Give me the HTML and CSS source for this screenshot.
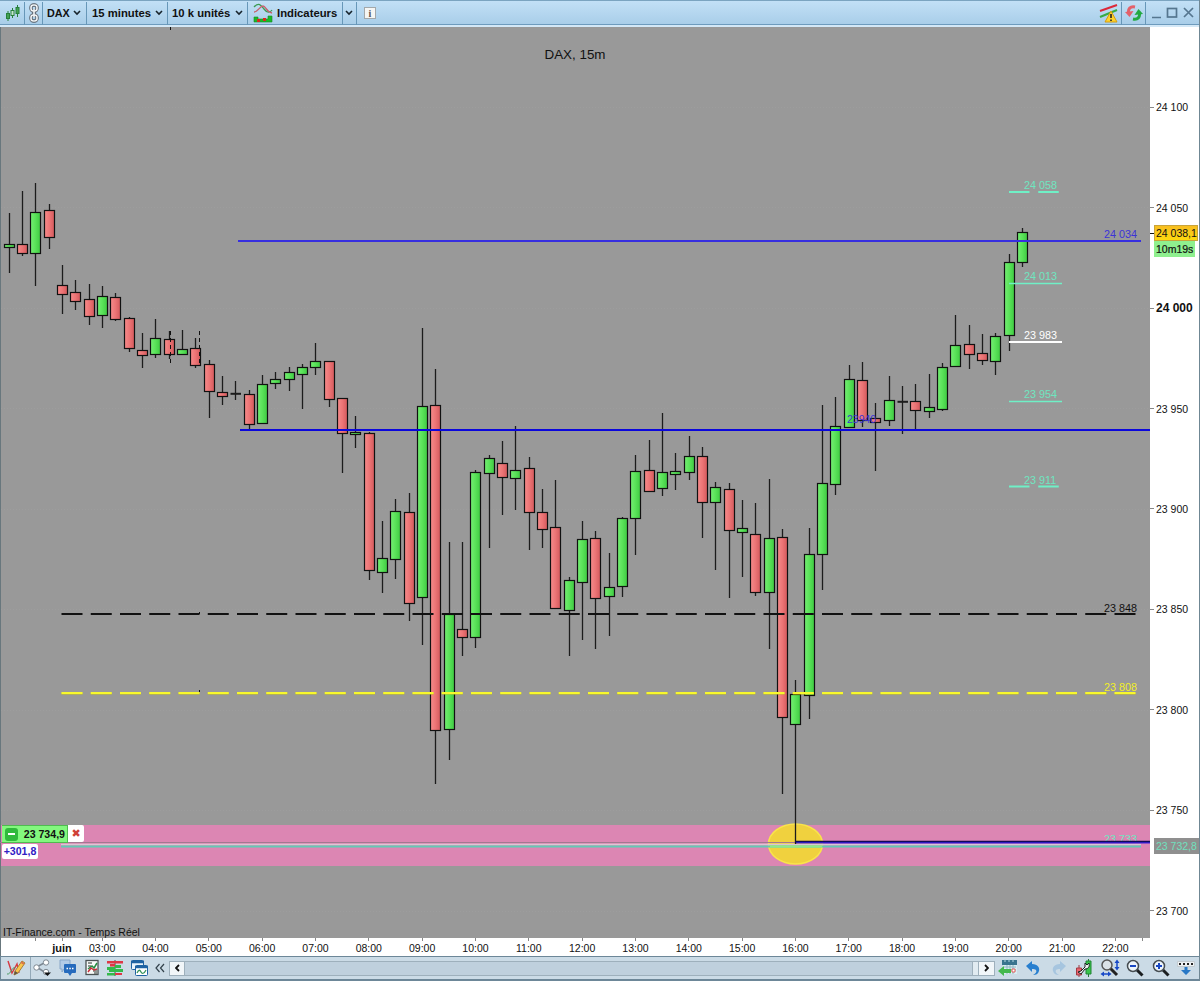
FILE: index.html
```html
<!DOCTYPE html>
<html lang="fr">
<head>
<meta charset="utf-8"/>
<title>DAX, 15m</title>
<link rel="stylesheet" href="styles.css">
</head>
<body>
<div class="window">
<header class="toolbar">
	<div class="tool tool-candles">
		<svg width="16" height="18" viewBox="0 0 16 18"><g stroke="#26803a" fill="#43a054"><path d="M3 7v10M7.500 4v10M12.500 1v12"/><rect x="1.500" y="9.500" width="3" height="5"/><rect x="6" y="6.500" width="3" height="5" fill="#c5e5d0"/><rect x="11" y="3.500" width="3" height="6"/></g></svg>
	</div>
	<div class="tool tool-link">
		<svg width="12" height="20" viewBox="0 0 12 20" fill="none"><g stroke="#59616a" stroke-width="3.400"><rect x="3" y="2" width="6" height="6" rx="2.500"/><rect x="3" y="12" width="6" height="6" rx="2.500"/><path d="M6 6v8"/></g><g stroke="#f1f4f6" stroke-width="1.600"><rect x="3" y="2" width="6" height="6" rx="2.500"/><rect x="3" y="12" width="6" height="6" rx="2.500"/><path d="M6 6v8"/></g></svg>
	</div>
	<div class="tool tool-symbol">DAX <svg class="chevron" viewBox="0 0 8 6"><path d="M1 1l3 3 3-3"/></svg></div>
	<div class="tool tool-period">15 minutes <svg class="chevron" viewBox="0 0 8 6"><path d="M1 1l3 3 3-3"/></svg></div>
	<div class="tool tool-units">10 k unités <svg class="chevron" viewBox="0 0 8 6"><path d="M1 1l3 3 3-3"/></svg></div>
	<div class="tool tool-indicators">
		<svg width="20" height="20" viewBox="0 0 20 20" fill="none"><path d="M1 4C6-1 8 2 11 6s6 4 8 1" stroke="#3b9a53" stroke-width="1.300"/><path d="M1 9C5 9 7 3 10 3s3 6 9 7" stroke="#c8606c" stroke-width="1.300"/><path d="M1 19v-5h4v2h10v-3h4v6z" fill="#19b927" stroke="#178b22" stroke-width=".6"/><path d="M4 16h3v3H4zM10 15h3v3h-3z" fill="#d82a20"/></svg>
		Indicateurs
	</div>
	<div class="tool tool-more"><svg class="chevron" viewBox="0 0 8 6"><path d="M1 1l3 3 3-3"/></svg></div>
	<div class="info">i</div>
	<div class="spacer"></div>
	<div class="tool tool-alert">
		<svg width="20" height="20" viewBox="0 0 20 20"><path d="M1 8L18 2" stroke="#dc2838" stroke-width="2"/><path d="M1 14L18 7" stroke="#38aa43" stroke-width="2"/><path d="M12 8l6 11H6z" fill="#ffd32b" stroke="#d49c12"/><path d="M12 11v4M12 16.500v1.500" stroke="#222" stroke-width="1.600"/></svg>
	</div>
	<div class="tool tool-refresh">
		<svg width="18" height="16" viewBox="0 0 18 16" fill="none" stroke-width="3"><path d="M10 2C5 1 3 4 3.500 8" stroke="#e3616a"/><path d="M0 7l4.500 5L8.500 6z" fill="#e3616a"/><path d="M8 14c5 1 7-2 6.500-6" stroke="#23a942"/><path d="M18 9l-4.500-5L9.500 10z" fill="#23a942"/></svg>
	</div>
	<svg class="window-buttons" width="42" height="12" viewBox="0 0 42 12" fill="none" stroke="#55768f" stroke-width="1.700"><path d="M0 10.500h9M32 1l9 9M41 1l-9 9"/><rect x="15.500" y="1.500" width="9" height="8.500"/></svg>
</header>

<div class="middle">
	<div class="chart">
		<svg class="plot" width="1150" height="911" viewBox="0 27 1150 911">
			<defs>
				<linearGradient id="up"><stop offset="0" stop-color="#75ee74"/><stop offset=".5" stop-color="#59e258"/><stop offset="1" stop-color="#3fc942"/></linearGradient>
				<linearGradient id="down"><stop offset="0" stop-color="#f68b8b"/><stop offset=".5" stop-color="#ec7475"/><stop offset="1" stop-color="#d3595c"/></linearGradient>
			</defs>
			<g id="grid"></g>
			<rect class="zone" x="1" y="825" width="1149" height="41"/>
			<text class="label aqua" x="1104" y="843">23 733</text>
			<ellipse class="marker" cx="795.500" cy="844" rx="27" ry="20"/>
			<path class="entry" d="M0 842.500h796"/>
			<path class="support-light" d="M61 844.500H1141"/>
			<path class="support" d="M61 846.500H1141"/>
			<path class="support-glow" d="M770 846.500H822"/>
			<path class="low-shade" d="M795 842.500h355"/>
			<g id="candles"></g>
			<path class="low-line" d="M795 841.500h355"/>
			<path class="session" d="M170.500 331v35M199.500 331v35"/>
			<path class="session" d="M170.500 27v3M199.500 612v2M199.500 690v2"/>
			<path class="resistance" d="M238 241H1141"/>
			<path class="pivot" d="M240 430H1150"/>
			<path class="dashed black" d="M61.500 614H1137"/>
			<path class="dashed yellow-edge" d="M61.500 693.500H1137"/>
			<path class="dashed yellow" d="M61.500 693H1137"/>
			<path class="level dash" d="M1009 192H1059M1009 486.500H1059"/>
			<path class="level thin" d="M1009 283.500H1062M1009 401.500H1062"/>
			<path class="level white" d="M1009 342H1062"/>
			<text class="label aqua" x="1024" y="189">24 058</text>
			<text class="label aqua" x="1024" y="280">24 013</text>
			<text class="label white" x="1024" y="339">23 983</text>
			<text class="label aqua" x="1024" y="398">23 954</text>
			<text class="label aqua" x="1024" y="484">23 911</text>
			<text class="label blue" x="1104" y="238">24 034</text>
			<text class="label blue tight" x="847" y="423">23940</text>
			<text class="label black" x="1104" y="611.500">23 848</text>
			<text class="label yellow" x="1104" y="690.500">23 808</text>
		</svg>
		<div class="chart-title">DAX, 15m</div>
		<div class="order">
			<div class="order-row">
				<div class="order-price"><span class="minus"></span>23 734,9</div>
				<div class="order-close">✖</div>
			</div>
			<div class="order-gain">+301,8</div>
		</div>
		<div class="source">IT-Finance.com - Temps Réel</div>
	</div>
	<div class="price-axis">
		<div class="price">24 100</div>
		<div class="price">24 050</div>
		<div class="price major">24 000</div>
		<div class="price">23 950</div>
		<div class="price">23 900</div>
		<div class="price">23 850</div>
		<div class="price">23 800</div>
		<div class="price">23 750</div>
		<div class="price">23 700</div>
		<div class="last-price">24 038,1</div>
		<div class="countdown">10m19s</div>
		<div class="low-price">23 732,8</div>
	</div>
</div>

<div class="time-axis">
	<div class="time edge"></div>
	<div class="time month">juin</div>
	<div class="time">03:00</div>
	<div class="time">04:00</div>
	<div class="time">05:00</div>
	<div class="time">06:00</div>
	<div class="time">07:00</div>
	<div class="time">08:00</div>
	<div class="time">09:00</div>
	<div class="time">10:00</div>
	<div class="time">11:00</div>
	<div class="time">12:00</div>
	<div class="time">13:00</div>
	<div class="time">14:00</div>
	<div class="time">15:00</div>
	<div class="time">16:00</div>
	<div class="time">17:00</div>
	<div class="time">18:00</div>
	<div class="time">19:00</div>
	<div class="time">20:00</div>
	<div class="time">21:00</div>
	<div class="time">22:00</div>
	<div class="time edge"></div>
</div>

<footer class="bottombar">
	<div class="draw">
		<svg width="20" height="18" viewBox="0 0 20 18" fill="none"><path d="M2 2l4 12 5-9 2 9" stroke="#d63a42" stroke-width="1.400"/><path d="M1 15C5 16 6 7 9 9" stroke="#4d9c64"/><path d="M8 16l1-4 7-10 3 2-7 10z" fill="#fbc64b" stroke="#a4803a"/><path d="M8 16l1-4 3 2z" fill="#615443"/><path d="M15 3l3 2" stroke="#db744a" stroke-width="2"/></svg>
	</div>
	<div class="icons-left">
		<svg width="20" height="18" viewBox="0 0 20 18"><path d="M13 3L3.500 8l9.500 6" fill="none" stroke="#7b8690" stroke-width="1.500"/><g fill="#fff" stroke="#7b8690"><circle cx="13" cy="3.500" r="2.700"/><circle cx="3.500" cy="8.500" r="2.700"/><circle cx="13" cy="13" r="2.700"/></g><path d="M11 13.500h7L14.500 17z" fill="#111"/></svg>
		<svg width="18" height="18" viewBox="0 0 18 18"><path d="M1 1h10v9H5l-2 3v-3H1z" fill="#b2cbe7" stroke="#88a7c9"/><path d="M6 5h10q1 0 1 1v7q0 1-1 1h-3l-2 3-2-3H6q-1 0-1-1V6q0-1 1-1z" fill="#266bbd"/><path d="M7.500 9.500H9M10.300 9.500h1.500M13 9.500h1.500" stroke="#fff" stroke-width="1.500"/></svg>
		<svg width="16" height="18" viewBox="0 0 16 18"><rect x="2" y="1.500" width="12" height="14" fill="#f7faf8" stroke="#4b5354" stroke-width="1.300"/><path d="M4 4h4M4 7h3M9 12h4M10 14h3" stroke="#29322d"/><path d="M4 10l4-3 2 2 3-5" fill="none" stroke="#258b41" stroke-width="1.500"/><path d="M4 13l3-4 3 2 3-1" fill="none" stroke="#c82c38" stroke-width="1.500"/></svg>
		<svg width="18" height="18" viewBox="0 0 18 18"><path d="M9 1v16" stroke="#44544a"/><g fill="#35b94c"><path d="M1 8h8v3H1zM3 11h6v2H3zM1 14h8v2.500H1z"/><path d="M9 6h6v3H9zM9 10h8v3H9z"/></g><g fill="#de3845"><path d="M1 2h8v2.500H1zM4 5h5v2.500H4zM9 2h8v2.500H9zM9 14h7v2H9z"/></g></svg>
		<svg width="20" height="18" viewBox="0 0 20 18"><rect x="1.500" y="1.500" width="12" height="9" rx="1" fill="#e9f3fb" stroke="#1f63a3"/><path d="M1 3h13" stroke="#1f63a3" stroke-width="2.500"/><rect x="5.500" y="6.500" width="12" height="10" rx="1" fill="#fff" stroke="#1f63a3"/><path d="M5 8h13" stroke="#1f63a3" stroke-width="2.500"/><path d="M7 14c2-4 3-3 4-1s3 2 5-2" fill="none" stroke="#35935a" stroke-width="1.300"/></svg>
	</div>
	<svg class="collapse" width="10" height="10" viewBox="0 0 10 10"><path d="M4.500 1L1 5l3.500 4M9 1L5.500 5 9 9"/></svg>
	<div class="scrollbar">
		<div class="scroll-button"><svg width="5" height="8" viewBox="0 0 5 8"><path d="M4 1L1 4l3 3"/></svg></div>
		<div class="scroll-track"></div>
		<div class="scroll-thumb"></div>
		<div class="scroll-button"><svg width="5" height="8" viewBox="0 0 5 8"><path d="M1 1l3 3-3 3"/></svg></div>
	</div>
	<div class="icons-right">
		<svg width="20" height="18" viewBox="0 0 20 18"><path d="M5 2h14v13H5z" fill="#d9edf2"/><path d="M4 1h15v5H4z" fill="#39748e"/><path d="M7 0v3M11 0v3M15 0v3" stroke="#b5d8e4"/><path d="M6 8h12M6 11h12M9 6v9M12 6v9M15 6v9" stroke="#92b7c3"/><path d="M14 10h3v3h-3z" fill="#fff" stroke="#df5d59"/><path d="M0 12l6-5v3h7v4H6v3z" fill="#44b84e"/></svg>
		<svg width="16" height="16" viewBox="0 0 16 16"><path d="M1 6l6-5v3c6 0 8 4 7 7-1 3-3 4-6 4 3-2 4-3 3-5-1-1-2-1-4-1v3z" fill="#287fcf"/></svg>
		<svg width="16" height="16" viewBox="0 0 16 16"><path d="M15 6L9 1v3C3 4 1 8 2 11c1 3 3 4 6 4-3-2-4-3-3-5 1-1 2-1 4-1v3z" fill="#a6c5df"/></svg>
		<svg width="18" height="18" viewBox="0 0 18 18"><path d="M13.500 0v18" stroke="#267a36"/><path d="M11 2h5v13h-5z" fill="#38c54b" stroke="#218534"/><path d="M4 6v12" stroke="#993842"/><path d="M1.500 9h5v7h-5z" fill="#e9636e" stroke="#a13b43"/><path d="M3 13l3-1 4-4V4l2 2 2-2c1 4-1 6-4 6l-4 5z" fill="#edf0ef" stroke="#1b2420"/></svg>
		<svg width="20" height="18" viewBox="0 0 20 18"><path d="M10 9l7 7" stroke="#222" stroke-width="3"/><circle cx="7" cy="6" r="5" fill="#dae2e7" stroke="#555" stroke-width="1.500"/><path d="M17 2v8M2 15h8" stroke="#1749c8" stroke-width="1.500"/><path d="M14.500 4L17 .5 19.500 4zM14.500 8L17 11.500 19.500 8zM4 12.500L.5 15 4 17.500zM8 12.500l3.500 2.500L8 17.500z" fill="#1749c8"/></svg>
		<svg width="18" height="18" viewBox="0 0 18 18"><path d="M10.500 10.500l6 6" stroke="#1b1e20" stroke-width="3"/><circle cx="7" cy="7" r="5.500" fill="#eef6fb" stroke="#464d51" stroke-width="1.500"/><path d="M4 7h6" stroke="#1947c2" stroke-width="2"/></svg>
		<svg width="18" height="18" viewBox="0 0 18 18"><path d="M10.500 10.500l6 6" stroke="#1b1e20" stroke-width="3"/><circle cx="7" cy="7" r="5.500" fill="#eef6fb" stroke="#464d51" stroke-width="1.500"/><path d="M4 7h6M7 4v6" stroke="#1947c2" stroke-width="2"/></svg>
		<svg width="18" height="16" viewBox="0 0 18 16"><path d="M.5 1.500h17v5H.5z" fill="#edf1f3" stroke="#c3cbd0"/><path d="M2 4h15" stroke="#222" stroke-width="2" stroke-dasharray="2 2"/><path d="M7.500 7h3v3H14l-5 5-5-5h3.500z" fill="#2878c6"/></svg>
	</div>
</footer>
</div>
<script src="chart.js"></script>
</body>
</html>
```
FILE: styles.css
```css
* {
	box-sizing: border-box;
}
body {
	margin: 0;
	font-family: "Liberation Sans", Arial, sans-serif;
	font-size: 10.5px;
	color: #111;
	background-color: #fff;
}
svg {
	display: block;
	flex: none;
}
.window {
	width: 1200px;
	height: 981px;
	overflow: hidden;
	border-right: 1px solid #6f8794;
	display: flex;
	flex-direction: column;
}

/* top toolbar */
.toolbar {
	height: 27px;
	flex: none;
	display: flex;
	align-items: center;
	padding: 0 5px 2px 1px;
	background: linear-gradient(#c2e0f6, #a9cee9 88%, #6d9bbd 89%, #6d9bbd 93%, #d3e8f7 94%);
	border-top: 1px solid #7ba4c0;
	font-size: 11.3px;
	font-weight: bold;
	white-space: nowrap;
}
.tool {
	height: 23px;
	display: flex;
	align-items: center;
	border-right: 1px solid #6797b8;
	padding: 0 4px;
}
.tool-candles {
	width: 24px;
}
.tool-link {
	width: 18px;
	padding: 0 3px;
}
.tool-symbol {
	width: 44px;
	padding: 0 5px 0 4px;
	font-size: 10.8px;
	justify-content: space-between;
}
.tool-period {
	width: 81px;
	padding-left: 5px;
	justify-content: space-between;
}
.tool-units {
	width: 80px;
	justify-content: space-between;
}
.tool-indicators {
	width: 95px;
	padding-left: 5px;
	gap: 4px;
}
.tool-more {
	width: 14px;
	padding: 0 2px;
}
.chevron {
	width: 8px;
	height: 6px;
	fill: none;
	stroke: #18242c;
	stroke-width: 1.6;
}
.info {
	width: 12px;
	height: 12px;
	margin-left: 7px;
	border: 1px solid #a3a8aa;
	background-color: #f6f6f4;
	font: bold 10px/11px "Liberation Serif", serif;
	text-align: center;
	color: #555;
}
.spacer {
	flex: 1;
}
.tool-alert {
	width: 23px;
	padding: 0;
}
.tool-refresh {
	width: 24px;
	padding: 0 3px;
}
.window-buttons {
	margin-left: 6px;
}

/* chart */
.middle {
	height: 911px;
	flex: none;
	display: flex;
}
.chart {
	position: relative;
	width: 1150px;
	background-color: #999;
	box-shadow: inset 1px 0 #68777d;
}
.chart-title {
	position: absolute;
	top: 20px;
	left: 0;
	width: 100%;
	text-align: center;
	font-size: 13.4px;
}
#grid path {
	stroke: #9d9d9d;
	stroke-dasharray: 1 2;
}
#candles path {
	stroke: #1c1c1c;
	stroke-width: 1.3;
}
#candles rect {
	stroke: #111;
	stroke-width: 1.2;
}
.zone {
	fill: #dc86b3;
}
.marker {
	fill: #f0d13e;
	stroke: #f9e44a;
	stroke-width: 1.5;
}
.entry {
	stroke: #a27890;
}
.support-light {
	stroke: #dbc6d3;
	stroke-width: 1.5;
}
.support {
	stroke: #62c9b5;
	stroke-width: 2;
}
.support-glow {
	stroke: #8ee98d;
	stroke-width: 2;
}
.low-line {
	stroke: #100a58;
	stroke-width: 1.5;
}
.low-shade {
	stroke: #3a1fe0;
	stroke-width: 2;
}
.session {
	stroke: #111;
	stroke-dasharray: 4 3;
}
.resistance {
	stroke: #372fe0;
	stroke-width: 2;
}
.pivot {
	stroke: #0a06dc;
	stroke-width: 2;
}
.dashed {
	stroke-width: 2;
	stroke-dasharray: 21 8.25;
}
path.black {
	stroke: #111;
}
path.yellow {
	stroke: #f8f82c;
}
path.yellow-edge {
	stroke: #c9c51b;
}
.level {
	stroke: #6ff0c6;
	stroke-width: 2;
}
.level.thin {
	stroke-width: 1.4;
}
.level.dash {
	stroke-dasharray: 20.5 8.75;
}
.level.white {
	stroke: #fff;
}
.label {
	font-size: 10.8px;
}
.label.aqua {
	fill: #6fe5c0;
}
.label.white {
	fill: #fff;
}
.label.blue {
	fill: #3b33d8;
}
.label.black {
	fill: #111;
}
.label.yellow {
	fill: #f1ee25;
}
.tight {
	font-size: 10.5px;
}
.order {
	position: absolute;
	left: 2px;
	top: 798px;
	font-size: 10.6px;
	font-weight: bold;
}
.order-row {
	display: flex;
}
.order-price {
	width: 66px;
	height: 18px;
	padding: 0 2px 0 3px;
	display: flex;
	align-items: center;
	justify-content: space-between;
	background-color: #83f87e;
	border: solid #4fbb50;
	border-width: 1px 1px 1px 0;
	white-space: nowrap;
}
.minus {
	width: 13px;
	height: 13px;
	border-radius: 3px;
	background: linear-gradient(#fff, #fff) center / 7px 2px no-repeat #31ba3c;
}
.order-close {
	width: 16px;
	height: 17px;
	background-color: #fff;
	border-radius: 0 2px 2px 0;
	color: #cf4238;
	font: 11px/17px "DejaVu Sans", sans-serif;
	text-align: center;
}
.order-gain {
	width: 36px;
	height: 15px;
	margin-top: 1px;
	background-color: #fff;
	border-radius: 2px;
	line-height: 15px;
	text-align: center;
	color: #3020c4;
}
.source {
	position: absolute;
	left: 3px;
	top: 899px;
	font-size: 10.5px;
	line-height: 12px;
}

/* axes */
.price-axis {
	position: relative;
	width: 49px;
	padding-top: 30px;
	background-color: #fff;
}
.price {
	height: 100.45px;
	display: flex;
	align-items: center;
	gap: 2px;
	white-space: nowrap;
}
.price::before {
	content: "";
	width: 4px;
	height: 1px;
	background-color: #888;
}
.price.major {
	font-size: 12px;
	font-weight: bold;
}
.last-price, .countdown, .low-price {
	position: absolute;
	left: 4px;
	padding-left: 2px;
	height: 16px;
	line-height: 16px;
	white-space: nowrap;
}
.last-price {
	top: 198px;
	width: 44px;
	background: linear-gradient(#f7bd20, #fdd90f);
	border: 1px solid #c9a43a;
	padding-left: 1px;
	line-height: 15px;
}
.last-price::before {
	content: "";
	position: absolute;
	left: -5px;
	top: 7px;
	width: 4px;
	height: 1px;
	background-color: #111;
}
.countdown {
	top: 214px;
	width: 41px;
	background-color: #8ff08f;
	-webkit-text-stroke: .2px #111;
}
.low-price {
	top: 811px;
	width: 45px;
	background-color: #8f8f8f;
	color: #6fe0be;
}
.time-axis {
	height: 18px;
	flex: none;
	display: flex;
	background-color: #fff;
	border-left: 1px solid #68777d;
	padding-left: 7.5px;
	white-space: nowrap;
}
.time {
	width: 53.34px;
	flex: none;
	display: flex;
	flex-direction: column;
	align-items: center;
	line-height: 12px;
}
.time::before {
	content: "";
	width: 1px;
	height: 3px;
	margin-bottom: 1px;
	background-color: #888;
}
.time.month {
	width: 27px;
	font-size: 11px;
	font-weight: bold;
}
.time.edge {
	width: 53px;
}
.time.edge:first-child {
	width: 54px;
	margin-right: -14px;
}
.time.edge:last-child {
	margin-left: -26px;
}

/* bottom toolbar */
.bottombar {
	height: 25px;
	flex: none;
	display: flex;
	align-items: center;
	background-color: #cbdbe6;
	border: solid #6d8798;
	border-width: 1px 0 2px 1px;
}
.draw {
	width: 30px;
	height: 22px;
	padding: 2px 0 0 5px;
	border-right: 1px solid #93a9b8;
}
.icons-left {
	width: 122px;
	padding: 0 3px 0 2px;
	display: flex;
	align-items: center;
	justify-content: space-between;
}
.collapse {
	margin-left: 2px;
	fill: none;
	stroke: #33424c;
	stroke-width: 1.2;
}
.scrollbar {
	width: 826px;
	height: 15px;
	margin-left: 4px;
	display: flex;
	border: 1px solid #9eb0bc;
}
.scroll-track {
	flex: 1;
	background-color: #bfd0dd;
}
.scroll-thumb {
	width: 7px;
	background-color: #e1ebf1;
	border: solid #9eb0bc;
	border-width: 0 1px;
}
.scroll-button {
	width: 15px;
	display: flex;
	align-items: center;
	justify-content: center;
	background-color: #f1f6f9;
	border-right: 1px solid #9eb0bc;
}
.scroll-button:last-child {
	border-right: 0;
}
.scroll-button path {
	fill: none;
	stroke: #111;
	stroke-width: 1.8;
}
.icons-right {
	width: 204px;
	display: grid;
	grid-template-columns: repeat(8, 25.5px);
	align-items: center;
	justify-items: center;
}
```
FILE: chart.js
```js
// one entry per 15 minutes: high, body top, body bottom, low, direction
var candles = [
	[213,244,247,273,"up"], [191,244,253,256,"down"], [183,212,253,286,"up"], [204,210,237,249,"down"],
	[265,285,294,314,"down"], [280,292,301,310,"down"], [284,299,316,325,"down"], [286,296,315,328,"up"],
	[293,297,319,321,"down"], [317,318,348,352,"down"], [333,350,355,368,"down"], [319,338,354,358,"up"],
	[331,339,354,359,"down"], [330,349,354,355,"up"], [338,348,365,368,"down"], [360,364,391,418,"down"],
	[376,392,396,405,"down"], [381,393,393,400,"doji"], [390,394,424,429,"down"], [375,384,423,424,"up"],
	[372,379,383,389,"up"], [367,372,379,391,"up"], [364,367,374,409,"up"], [343,361,367,375,"up"],
	[361,361,399,407,"down"], [398,398,433,473,"down"], [416,432,434,448,"up"], [432,433,570,580,"down"],
	[521,558,572,593,"up"], [499,511,559,579,"up"], [493,512,603,621,"down"], [328,406,597,645,"up"],
	[369,405,730,784,"down"], [542,614,729,760,"up"], [542,629,637,656,"down"], [470,472,637,648,"up"],
	[455,458,473,548,"up"], [441,463,477,515,"down"], [426,470,478,510,"up"], [457,468,512,550,"down"],
	[489,512,529,548,"down"], [480,527,608,609,"down"], [577,580,610,656,"up"], [521,539,582,640,"up"],
	[531,538,598,649,"down"], [553,587,596,636,"up"], [517,518,586,597,"up"], [455,471,518,555,"up"],
	[440,470,491,492,"down"], [413,472,488,496,"up"], [453,471,474,490,"up"], [436,456,472,480,"up"],
	[447,456,502,538,"down"], [482,487,502,570,"up"], [483,489,530,598,"down"], [500,528,532,577,"up"],
	[503,534,592,596,"down"], [479,538,592,649,"up"], [529,537,717,794,"down"], [680,694,724,844,"up"],
	[528,554,695,719,"up"], [405,483,554,590,"up"], [397,426,484,495,"up"], [365,379,427,428,"up"],
	[362,380,420,427,"down"], [403,418,422,471,"down"], [376,400,420,426,"up"], [386,401,401,434,"doji"],
	[384,401,410,429,"down"], [374,407,411,418,"up"], [363,367,409,411,"up"], [315,345,366,367,"up"],
	[325,344,354,369,"down"], [334,353,360,365,"down"], [333,336,361,375,"up"], [254,262,335,351,"up"],
	[228,232,262,267,"up"]
];
var SLOT = 13.33;

function draw_candles() {
	var out = "";
	candles.forEach(function (c, i) {
		var x = Math.floor(9.3 + SLOT * i) + 0.5;
		out += "<path d='M" + x + " " + c[0] + "V" + c[3] + "'/>";
		if (c[4] == "doji") {
			out += "<path style='stroke-width:2' d='M" + (x - 5) + " " + (c[1] + 0.8) + "h10.5'/>";
		} else {
			out += "<rect x='" + (x - 5) + "' y='" + (c[1] + 0.5) + "' width='10' height='" + (c[2] - c[1]) + "' fill='url(#" + c[4] + ")'/>";
		}
	});
	document.getElementById("candles").innerHTML = out;
}
function draw_grid() {
	var out = "";
	for (var i = 0; i < 9; i++) {
		out += "<path d='M1 " + (Math.round(107 + 100.45 * i) + 0.5) + "H1150'/>";
	}
	document.getElementById("grid").innerHTML = out;
}
draw_grid();
draw_candles();
```
